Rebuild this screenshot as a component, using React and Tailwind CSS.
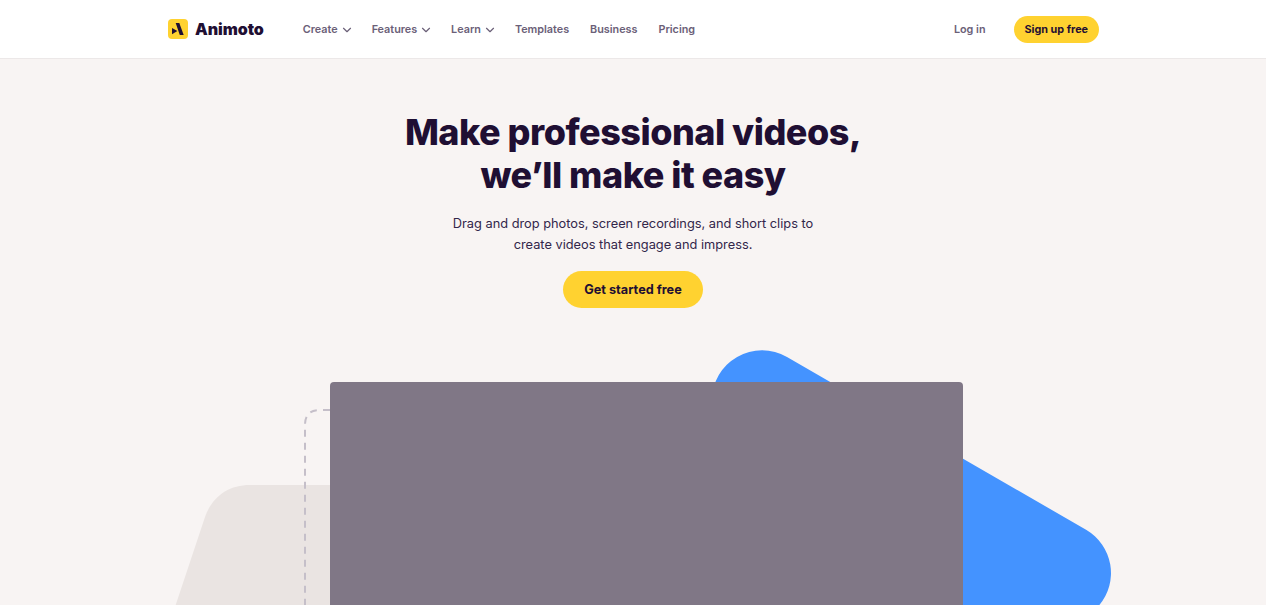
import React from 'react';
import { ChevronDown } from 'lucide-react';

const NavLink = ({ label, menu }) => (
  <a className="flex items-center gap-[2px] pt-[2px] text-[10.8px] font-semibold text-[#6b6078]">
    {label}
    {menu && <ChevronDown className="w-[14px] h-[14px] -mr-[3px]" strokeWidth={2} />}
  </a>
);

const Logo = () => (
  <a className="flex items-center gap-[7px]">
    <svg width="21" height="21" viewBox="0 0 21 21">
      <rect x="1" y="0" width="20" height="20" rx="4" fill="#ffd230" />
      <path d="M8.7 4h3.6l4.4 12h-3.9z" fill="#1f0f33" />
      <path d="M5 9.1l5.4 3-5.4 3.2z" fill="#1f0f33" />
    </svg>
    <span className="text-[16px] font-black text-[#1f0f33] tracking-[-0.05px]">Animoto</span>
  </a>
);

const HeroArt = () => (
  <svg className="absolute left-0 top-[-82px]" width="1266" height="305" viewBox="0 300 1266 305">
    <path d="M712 400A50 50 0 0 1 787 357L1086.5 530A50 50 0 0 1 1099.4 605L1097 610L712 610Z" fill="#4493ff" />
    <path d="M174 610L205 517C212 497 228 485 250 485L340 485L340 610Z" fill="#eae4e2" />
    <path d="M330 410H320Q305 410 305 425V610" fill="none" stroke="#c5bfc9" strokeWidth="2" strokeDasharray="7 6" />
  </svg>
);

export default function App() {
  return (
    <div className="h-[605px] overflow-hidden bg-[#f8f4f3] font-['Inter',sans-serif]">
      <header className="h-[59px] bg-white border-b border-[#ece8e8] flex items-center px-[167px]">
        <Logo />
        <nav className="flex items-center gap-[21px] ml-[39px]">
          <NavLink label="Create" menu />
          <NavLink label="Features" menu />
          <NavLink label="Learn" menu />
          <NavLink label="Templates" />
          <NavLink label="Business" />
          <NavLink label="Pricing" />
        </nav>
        <div className="ml-auto flex items-center gap-[28px]">
          <NavLink label="Log in" />
          <a className="h-[27px] px-[11px] pt-[2px] rounded-full bg-[#ffd230] flex items-center text-[10.8px] font-bold text-[#1f0f33]">Sign up free</a>
        </div>
      </header>

      <main className="flex flex-col items-center relative">
        <h1 className="mt-[52px] text-center text-[36px] leading-[43px] font-extrabold text-[#1f0f33] tracking-[-0.5px]">
          Make professional videos,<br />we’ll make it easy
        </h1>
        <p className="mt-[16px] text-center text-[12.8px] leading-[21px] text-[#32264a]">
          Drag and drop photos, screen recordings, and short clips to<br />create videos that engage and impress.
        </p>
        <a className="mt-[16px] h-[37px] w-[140px] rounded-full bg-[#ffd230] flex items-center justify-center text-[12.7px] font-bold text-[#1f0f33]">Get started free</a>
        <div className="relative w-full mt-[74px]">
          <HeroArt />
          <div className="relative w-[633px] h-[300px] ml-[330px] rounded-[4px] bg-[#807786]" />
        </div>
      </main>
    </div>
  );
}
